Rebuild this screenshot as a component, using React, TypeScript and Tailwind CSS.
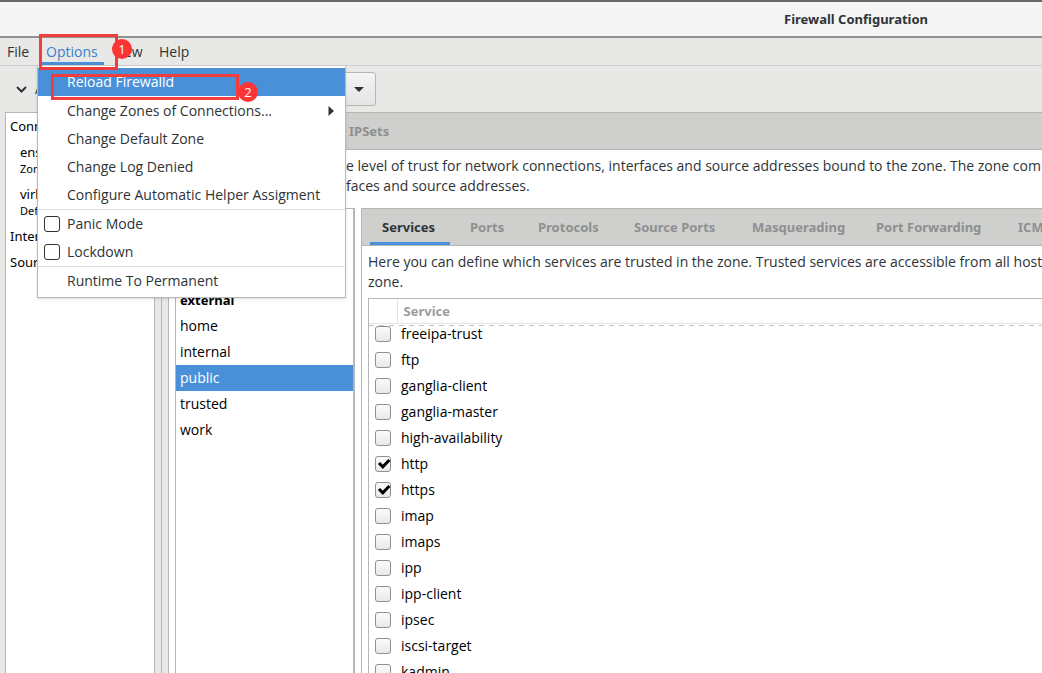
import { useState } from "react";
import type { ReactNode } from "react";

const bindings = [
  { name: "ens33", detail: "Zone: public" },
  { name: "virbr0", detail: "Default Zone" },
];

const zones = ["block", "dmz", "drop", "external", "home", "internal", "public", "trusted", "work"];

const zoneTabs = [
  { label: "Services", width: "w-[80px]" },
  { label: "Ports", width: "w-[60px]" },
  { label: "Protocols", width: "w-[88px]" },
  { label: "Source Ports", width: "w-[110px]" },
  { label: "Masquerading", width: "w-[116px]" },
  { label: "Port Forwarding", width: "w-[134px]" },
  { label: "ICMP Filter", width: "w-[98px]" },
];

const serviceNames = [
  "freeipa-trust",
  "ftp",
  "ganglia-client",
  "ganglia-master",
  "high-availability",
  "http",
  "https",
  "imap",
  "imaps",
  "ipp",
  "ipp-client",
  "ipsec",
  "iscsi-target",
  "kadmin",
];

function TitleBar() {
  return (
    <header className="flex h-[38px] shrink-0 items-center border-t-2 border-b-2 border-t-[#6a676b] border-b-[#929292] bg-[#f5f5f5] pt-px pl-[784px]">
      <h1 className="font-['Noto_Sans',sans-serif] text-[13px] font-bold whitespace-nowrap">Firewall Configuration</h1>
    </header>
  );
}

function MenuItem({ children, className = "" }: { children: ReactNode; className?: string }) {
  return (
    <button
      type="button"
      role="menuitem"
      className={`flex h-7 w-full items-center justify-between pr-[11px] pl-[29px] text-left whitespace-nowrap ${className}`}
    >
      {children}
    </button>
  );
}

function MenuCheck({ label }: { label: string }) {
  return (
    <label className="flex h-7 items-center gap-[7px] pl-1.5">
      <input
        type="checkbox"
        className="size-4 appearance-none rounded-[3px] border border-[#2e3436] bg-white checked:bg-[#4a90d9]"
      />
      {label}
    </label>
  );
}

function Badge({ children, className }: { children: ReactNode; className: string }) {
  return (
    <span
      className={`absolute z-30 flex size-5 items-center justify-center rounded-full bg-[#fc3436] text-[13px] text-white ${className}`}
    >
      {children}
    </span>
  );
}

function OptionsMenu() {
  return (
    <div
      role="menu"
      className="absolute top-7 left-[37px] z-10 w-[309px] border border-t-0 border-[#b9b9b9] bg-white pt-0.5 pb-0.5 shadow-sm"
    >
      <MenuItem className="mb-px bg-[#4a90d9] text-white">Reload Firewalld</MenuItem>
      <MenuItem>
        Change Zones of Connections...
        <svg className="h-[10px] w-[6px]" viewBox="0 0 6 10" fill="#2e3436" aria-hidden="true">
          <path d="M0.5 0L6 5L0.5 10Z" />
        </svg>
      </MenuItem>
      <MenuItem>Change Default Zone</MenuItem>
      <MenuItem>Change Log Denied</MenuItem>
      <MenuItem>Configure Automatic Helper Assigment</MenuItem>
      <div className="h-px bg-[#dedede]" />
      <MenuCheck label="Panic Mode" />
      <MenuCheck label="Lockdown" />
      <div className="h-px bg-[#dedede]" />
      <MenuItem>Runtime To Permanent</MenuItem>
    </div>
  );
}

function MenuBar() {
  return (
    <nav className="relative flex h-7 shrink-0 border-b border-[#cfcfcf] text-sm">
      <button type="button" className="w-[42px] pl-[7px] text-left">
        File
      </button>
      <button type="button" className="w-[62px] border-b-3 border-[#4a90d9] pt-[3px] pl-1 text-left text-[#3a80cc]">
        Options
      </button>
      <button type="button" className="w-12 pl-2 text-left">
        View
      </button>
      <button type="button" className="pl-[7px] text-left">
        Help
      </button>
      <OptionsMenu />
      <div className="absolute -top-1 left-[39px] z-20 h-[36px] w-[79px] border-3 border-[#f23c3e]" />
      <Badge className="top-[1px] left-[112px]">1</Badge>
      <div className="absolute top-[36px] left-[51px] z-20 h-[26px] w-[188px] border-3 border-[#f23c3e]" />
      <Badge className="top-[44px] left-[238px]">2</Badge>
    </nav>
  );
}

function Toolbar() {
  return (
    <div className="flex h-[46px] shrink-0 items-start pl-4">
      <button type="button" className="flex h-[46px] w-[284px] shrink-0 items-center gap-2 text-sm">
        <svg
          className="h-[7px] w-[11px]"
          viewBox="0 0 11 7"
          fill="none"
          stroke="#2e3436"
          strokeWidth="2"
          aria-hidden="true"
        >
          <path d="M1 1L5.5 5.5L10 1" />
        </svg>
        Active Bindings
      </button>
      <button
        type="button"
        aria-label="Zone actions"
        className="mt-[6px] flex h-[34px] w-[76px] items-center justify-end rounded-[3px] border border-[#b6b6b3] bg-linear-to-b from-[#f4f4f4] to-[#e4e4e4] pr-[11px]"
      >
        <svg className="h-[5px] w-[10px]" viewBox="0 0 10 5" fill="#2e3436" aria-hidden="true">
          <path d="M0 0H10L5 5Z" />
        </svg>
      </button>
    </div>
  );
}

function BindingsPane() {
  return (
    <aside className="ml-[5px] w-[150px] shrink-0 overflow-hidden border border-b-0 border-[#b6b6b3] bg-white pl-1 font-['Noto_Sans',sans-serif] text-[13px] whitespace-nowrap text-black">
      <h2 className="h-[26px] leading-[26px]">Connections</h2>
      {bindings.map((binding) => (
        <div key={binding.name} className="h-[42px] pt-1 pl-[10px]">
          <p className="leading-[18px]">{binding.name}</p>
          <p className="text-[11px] leading-4">{binding.detail}</p>
        </div>
      ))}
      <h2 className="h-[26px] leading-[26px]">Interfaces</h2>
      <h2 className="h-[26px] leading-[26px]">Sources</h2>
    </aside>
  );
}

function ZoneList() {
  const [selected, setSelected] = useState("public");
  return (
    <ul className="w-[180px] shrink-0 border-t border-r-2 border-l border-[#b6b6b3] bg-white text-sm text-black">
      {zones.map((zone) => (
        <li key={zone}>
          <button
            type="button"
            onClick={() => setSelected(zone)}
            className={`block h-[26px] w-full pl-1 text-left ${zone === selected ? "bg-[#4a90d9] text-white" : ""} ${
              zone === "external" ? "font-['Noto_Sans',sans-serif] text-[13px] font-bold" : ""
            }`}
          >
            {zone}
          </button>
        </li>
      ))}
    </ul>
  );
}

function ServiceTable() {
  const [enabled, setEnabled] = useState<string[]>(["http", "https"]);
  const toggle = (name: string) =>
    setEnabled((now) => (now.includes(name) ? now.filter((item) => item !== name) : [...now, name]));

  return (
    <div className="ml-1.5 min-h-0 flex-1 overflow-hidden border-t border-l border-[#b6b6b3] text-sm">
      <table className="w-full border-collapse">
        <thead>
          <tr className="h-[24px] border-b border-[#e4e4e4]">
            <th className="w-[28px] border-r border-[#e4e4e4]" aria-label="Enabled" />
            <th className="py-0 pl-1.5 text-left font-['Noto_Sans',sans-serif] text-[13px] leading-[24px] font-bold text-[#9a9c9b]">
              Service
            </th>
          </tr>
        </thead>
        <tbody className="text-black">
          <tr aria-hidden="true">
            <td colSpan={2} className="h-0 p-0">
              <div className="mt-px h-px bg-[repeating-linear-gradient(90deg,#c4c4c4_0_5px,transparent_5px_10px)]" />
            </td>
          </tr>
          {serviceNames.map((name, index) => (
            <tr key={name} className={index === 0 ? "h-[21px]" : "h-[26px]"}>
              <td className={`p-0 pl-1.5 ${index === 0 ? "align-top" : "align-middle"}`}>
                <span className="relative block size-4">
                  <input
                    id={`service-${name}`}
                    type="checkbox"
                    checked={enabled.includes(name)}
                    onChange={() => toggle(name)}
                    className="peer block size-4 appearance-none rounded-[3px] border border-[#8f918f] bg-linear-to-b from-[#fafafa] to-[#e9e9e9]"
                  />
                  <svg
                    className="pointer-events-none absolute inset-0 hidden size-4 peer-checked:block"
                    viewBox="0 0 16 16"
                    aria-hidden="true"
                  >
                    <path d="M4 7L7.8 10.8L14.4 4" fill="none" stroke="#000" strokeWidth="3" />
                  </svg>
                </span>
              </td>
              <td className={`p-0 pl-1 ${index === 0 ? "align-top" : "align-middle"}`}>
                <label htmlFor={`service-${name}`} className="block leading-4">
                  {name}
                </label>
              </td>
            </tr>
          ))}
        </tbody>
      </table>
    </div>
  );
}

function ZoneDetails() {
  return (
    <section className="ml-[6px] flex min-w-0 flex-1 flex-col overflow-hidden border-t border-l border-[#b6b6b3]">
      <div
        role="tablist"
        className="flex h-[37px] shrink-0 gap-2 border-b border-[#b6b6b3] bg-[#cfcfcd] pl-2 font-['Noto_Sans',sans-serif]"
      >
        {zoneTabs.map(({ label, width }, index) => (
          <button
            key={label}
            type="button"
            role="tab"
            aria-selected={index === 0}
            className={`shrink-0 border-b-3 pt-1 pl-3 text-left text-[13px] font-bold whitespace-nowrap ${width} ${
              index === 0 ? "border-[#4a90d9] text-[#2e3436]" : "border-transparent text-[#8e908f]"
            }`}
          >
            {label}
          </button>
        ))}
      </div>
      <p className="shrink-0 py-1.5 pl-1.5 text-sm leading-5 whitespace-nowrap">
        Here you can define which services are trusted in the zone. Trusted services are accessible from all hosts
        <br />
        zone.
      </p>
      <ServiceTable />
    </section>
  );
}

export default function App() {
  return (
    <div className="flex h-screen flex-col overflow-hidden bg-[#e8e8e7] font-['Open_Sans',sans-serif] text-[#2e3436]">
      <TitleBar />
      <MenuBar />
      <Toolbar />
      <main className="flex min-h-0 flex-1">
        <BindingsPane />
        <div className="mr-[6px] ml-[6px] w-px shrink-0 bg-[#b6b6b3]" />
        <div className="flex min-w-0 flex-1 flex-col overflow-hidden border-t border-l border-[#b6b6b3] bg-white">
          <div
            role="tablist"
            className="flex h-[37px] shrink-0 border-b border-[#b6b6b3] bg-[#cfcfcd] pl-[180px] font-['Noto_Sans',sans-serif]"
          >
            <button type="button" role="tab" className="pt-px text-[13px] font-bold text-[#8e908f]">
              IPSets
            </button>
          </div>
          <p className="shrink-0 pt-1.5 pb-3 pl-[177px] text-sm leading-5 whitespace-nowrap">
            e level of trust for network connections, interfaces and source addresses bound to the zone. The zone combines
            <br />
            faces and source addresses.
          </p>
          <div className="flex min-h-0 flex-1 pl-[6px]">
            <ZoneList />
            <ZoneDetails />
          </div>
        </div>
      </main>
    </div>
  );
}
